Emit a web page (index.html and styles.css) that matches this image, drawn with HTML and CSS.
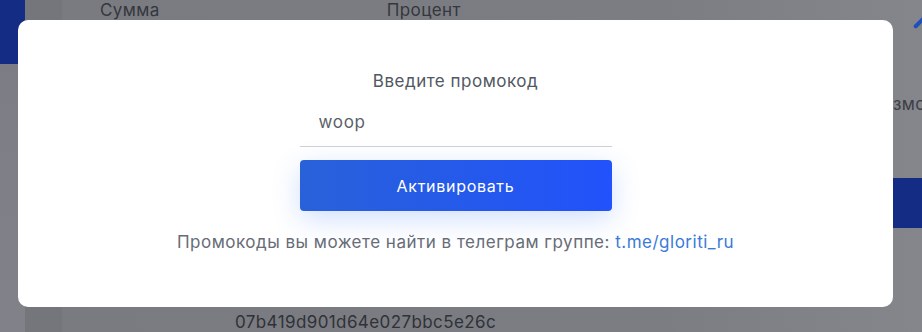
FILE: index.html
```html
<!DOCTYPE html>
<html lang="ru">

<head>
    <meta charset="UTF-8">
    <meta name="viewport" content="width=device-width, initial-scale=1.0">
    <title>Промокод</title>
    <link rel="stylesheet" href="styles.css">
</head>

<body>
    <!-- страница под затемнением -->
    <div class="page">
        <div class="sidebar">
            <div class="sidebar-accent"></div>
        </div>
        <div class="rail"></div>
        <div class="main">
            <div class="table-head">
                <span class="col-sum">Сумма</span>
                <span class="col-percent">Процент</span>
                <span class="col-edge"></span>
            </div>
            <div class="side-note">змо</div>
            <div class="side-button"></div>
            <div class="hash">07b419d901d64e027bbc5e26c</div>
        </div>
    </div>

    <!-- модальное окно промокода -->
    <div class="modal">
        <div class="modal-title">Введите промокод</div>
        <input class="promo-input" type="text" value="woop">
        <button class="promo-button">Активировать</button>
        <div class="promo-hint">
            Промокоды вы можете найти в телеграм группе: <a href="#">t.me/gloriti_ru</a>
        </div>
    </div>
</body>

</html>
```

FILE: styles.css
```css
body {
    margin: 0;
    padding: 0;
    font-family: Inter, "Noto Sans", sans-serif;
    font-size: 17px;
    letter-spacing: 0.5px;
    background-color: #7b7c82;
    overflow: hidden;
}

.page {
    display: flex;
    height: 332px;
}

.sidebar {
    width: 25px;
    background: linear-gradient(180deg, #7a7b81 0%, #7e7f86 40%, #818289 100%);
}

.sidebar-accent {
    height: 64px;
    background-color: #142c84;
    border-bottom-right-radius: 3px;
}

.rail {
    width: 37px;
    background-color: #75767c;
}

.main {
    flex: 1;
    position: relative;
    background: linear-gradient(90deg, #7a7b81 0%, #7c7d83 70%, #85868c 100%);
    color: #34373d;
}

.table-head {
    display: flex;
    line-height: 20px;
    letter-spacing: 0.4px;
}

.col-sum {
    margin-left: 38px;
}

.col-percent {
    margin-left: 227px;
}

/* всё, что видно справа от окна */
.side-note {
    position: absolute;
    left: 831px;
    top: 94px;
    line-height: 20px;
    letter-spacing: 0.4px;
    white-space: nowrap;
    color: #3b3e45;
}

.col-edge {
    position: absolute;
    left: 850px;
    top: 20px;
    width: 16px;
    height: 4px;
    background-color: #1f4fb8;
    border-radius: 2px;
    transform: rotate(-45deg);
}

.side-button {
    position: absolute;
    left: 831px;
    top: 178px;
    width: 40px;
    height: 50px;
    background-color: #142c84;
}

.hash {
    position: absolute;
    left: 173px;
    top: 312px;
    line-height: 20px;
    letter-spacing: 0.4px;
    color: #2f3238;
}

.modal {
    position: fixed;
    left: 18px;
    top: 20px;
    width: 875px;
    height: 287px;
    box-sizing: border-box;
    padding-top: 51px;
    background-color: #fff;
    border-radius: 10px;
    display: flex;
    flex-direction: column;
    align-items: center;
}

.modal-title {
    line-height: 20px;
    color: #525863;
}

.promo-input {
    margin-top: 10px;
    width: 312px;
    height: 46px;
    box-sizing: border-box;
    padding: 0 19px 4px;
    border: none;
    border-bottom: 1px solid #cfd1d6;
    font-family: inherit;
    font-size: 17px;
    letter-spacing: 0.7px;
    color: #5a5f69;
    outline: none;
    background: transparent;
}

.promo-button {
    margin-top: 13px;
    width: 312px;
    height: 51px;
    border: none;
    border-radius: 4px;
    background: linear-gradient(90deg, #2961d9 0%, #2152fb 100%);
    box-shadow: 0 8px 28px rgba(40, 110, 250, 0.22);
    color: #fff;
    font-family: inherit;
    font-size: 16px;
    letter-spacing: 0.7px;
}

.promo-hint {
    margin-top: 21px;
    line-height: 20px;
    color: #676c76;
}

.promo-hint a {
    color: #3a7bd8;
    text-decoration: none;
}
```
